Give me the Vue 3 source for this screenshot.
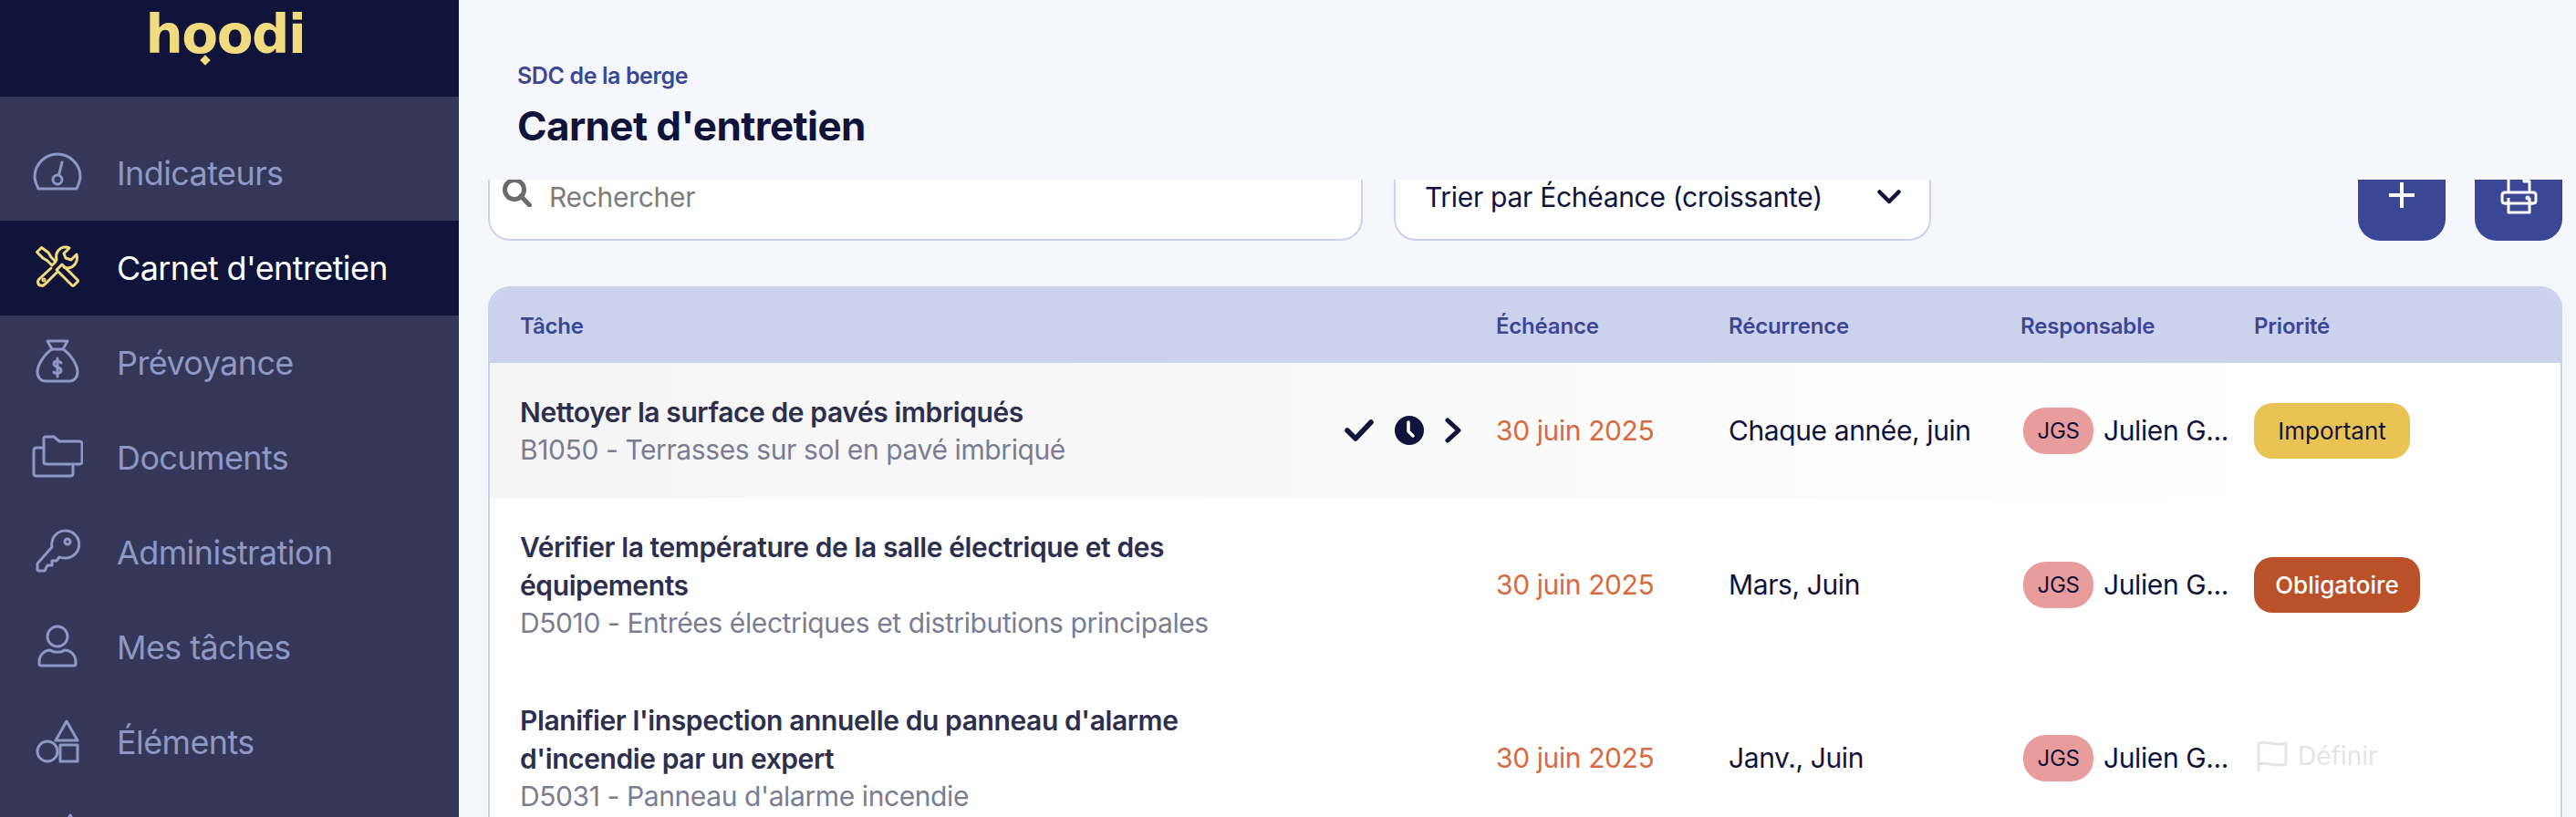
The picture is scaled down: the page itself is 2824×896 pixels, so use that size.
<script setup>
const nav = [
  { label: 'Indicateurs', paths: ['M7 45H49C51 40 53 37 53 32A25 25 0 0 0 3 32C3 37 5 40 7 45Z', 'M23 35a5 5 0 1 0 10 0a5 5 0 1 0-10 0Z', 'M29.5 30L33 16'] },
  { label: "Carnet d'entretien", active: true, paths: ['M5.5 10.5L10.5 5.5L18 11L21 16L26 21L22 25L17 20L12 17Z', 'M27 30L33 24L50 41Q51 42 50 43L46 47Q45 48 44 47Z', 'M27 19C25 12 30 4 38 5L41 6L35 12L37 17L43 19L49 13C51 20 47 28 38 28L35 27', 'M21 28L8 40C5 43 7 47 10 47C12 48 13 47 15 45L27 33', 'M12 41a1 1 0 1 0 2 0a1 1 0 1 0-2 0Z'] },
  { label: 'Prévoyance', paths: ['M17 4H39L34 13H22Z', 'M22 13C14 18 6 30 6 38C6 44 10 48 15 48H41C46 48 50 44 50 38C50 30 42 18 34 13', 'M32 28C31 26 24 25 24 29C24 33 32 32 32 36C32 40 25 40 24 38', 'M28 23V43'] },
  { label: 'Documents', paths: ['M13 7Q13 5 15 5H24L30 10H52Q55 10 55 13V32Q55 35 52 35H16Q13 35 13 32Z', 'M13 17H5Q2 17 2 20V45Q2 48 5 48H42Q45 48 45 45V36'] },
  { label: 'Administration', paths: ['M22 22A15 15 0 1 1 36 34C34 34 32 34 30 33L27 37H22V42H17L14 48H8Q6 48 6 46V40Z', 'M36 16a3 3 0 1 0 6 0a3 3 0 1 0-6 0Z'] },
  { label: 'Mes tâches', paths: ['M17 16a11 11 0 1 0 22 0a11 11 0 1 0-22 0Z', 'M8 44C8 36 14 31 20 31C24 34 32 34 36 31C42 31 48 36 48 44V46Q48 48 46 48H10Q8 48 8 46Z'] },
  { label: 'Éléments', paths: ['M38 5L50 26H26Z', 'M6 38a11 11 0 1 0 22 0a11 11 0 1 0-22 0Z', 'M31 31H50V49H31Z'] },
  { label: '', paths: ['M42 4L54 26H30Z'] }
]

const rows = [
  { title: 'Nettoyer la surface de pavés imbriqués', sub: 'B1050 - Terrasses sur sol en pavé imbriqué', rec: 'Chaque année, juin', prio: 'important', hover: true },
  { title: 'Vérifier la température de la salle électrique et des équipements', sub: 'D5010 - Entrées électriques et distributions principales', rec: 'Mars, Juin', prio: 'obligatoire' },
  { title: "Planifier l'inspection annuelle du panneau d'alarme d'incendie par un expert", sub: "D5031 - Panneau d'alarme incendie", rec: 'Janv., Juin', prio: '' }
]
</script>

<template>
  <div class="app">
    <aside class="side">
      <div class="brand"><span class="logo">hoodi<i class="dot"></i></span></div>
      <nav class="nav">
        <a v-for="item in nav" :key="item.label" class="nav-item" :class="{ active: item.active }">
          <svg class="nav-icon" viewBox="0 0 56 56" fill="none" stroke="currentColor" stroke-width="3" stroke-linejoin="round" stroke-linecap="round">
            <path v-for="d in item.paths" :key="d" :d="d" />
          </svg>
          <span>{{ item.label }}</span>
        </a>
      </nav>
    </aside>

    <main class="main">
      <header class="head">
        <div class="crumb">SDC de la berge</div>
        <h1 class="title">Carnet d'entretien</h1>
      </header>

      <div class="toolbar">
        <label class="search">
          <svg class="search-icon" viewBox="0 0 32 32" fill="none" stroke="#6b6b6b" stroke-width="5">
            <circle cx="13" cy="13" r="10.5" />
            <path d="M20 20L29.5 30" stroke-linecap="round" />
          </svg>
          <span>Rechercher</span>
        </label>
        <div class="sort">
          <span>Trier par Échéance (croissante)</span>
          <svg class="chev" viewBox="0 0 26 16" fill="none" stroke="#10133a" stroke-width="4.5" stroke-linecap="round" stroke-linejoin="round">
            <path d="M2.5 2.5L13 13L23.5 2.5" />
          </svg>
        </div>
        <div class="btns">
          <button class="btn">
            <svg width="30" height="30" viewBox="0 0 30 30" stroke="#fff" stroke-width="4"><path d="M15 1V29M1 15H29" /></svg>
          </button>
          <button class="btn">
            <svg width="44" height="48" viewBox="0 0 44 48" fill="none" stroke="#fff" stroke-width="3" stroke-linejoin="round">
              <path d="M11 21V6Q11 3 14 3H28L34 9V21M28 3V9H34" />
              <path d="M11 33H7Q4 33 4 30V24Q4 21 7 21H38Q41 21 41 24V30Q41 33 38 33H34" />
              <path d="M7 33H38M11 27V43H34V27" />
              <circle cx="32" cy="27" r="1" />
            </svg>
          </button>
        </div>
      </div>

      <section class="table">
        <div class="thead grid">
          <div>Tâche</div>
          <div>Échéance</div>
          <div>Récurrence</div>
          <div>Responsable</div>
          <div>Priorité</div>
        </div>
        <div v-for="row in rows" :key="row.title" class="row grid" :class="{ hover: row.hover }">
          <div class="task">
            <div class="task-text">
              <div class="task-title">{{ row.title }}</div>
              <div class="task-sub">{{ row.sub }}</div>
            </div>
            <div v-if="row.hover" class="actions">
              <svg width="32" height="24" viewBox="0 0 32 24" fill="none" stroke="#10133a" stroke-width="5.5" stroke-linecap="round" stroke-linejoin="round"><path d="M3 12L12 21L29 3" /></svg>
              <svg width="32" height="32" viewBox="0 0 32 32"><circle cx="16" cy="16" r="16" fill="#10133a" /><path d="M15 7V17L20 22" fill="none" stroke="#fff" stroke-width="3.5" stroke-linecap="round" stroke-linejoin="round" /></svg>
              <svg width="18" height="28" viewBox="0 0 18 28" fill="none" stroke="#10133a" stroke-width="5" stroke-linecap="round" stroke-linejoin="round"><path d="M3 3L15 14L3 25" /></svg>
            </div>
          </div>
          <div class="date">30 juin 2025</div>
          <div class="rec">{{ row.rec }}</div>
          <div class="resp"><span class="chip">JGS</span><span class="name">Julien G...</span></div>
          <div class="prio">
            <span v-if="row.prio === 'important'" class="badge important">Important</span>
            <span v-else-if="row.prio === 'obligatoire'" class="badge obligatoire">Obligatoire</span>
            <span v-else class="define">
              <svg width="34" height="34" viewBox="0 0 34 34" fill="none" stroke="#e4e5e8" stroke-width="3" stroke-linejoin="round"><path d="M2 34V3C12 0 22 7 32 3V26C22 30 12 23 2 26" /></svg>
              Définir
            </span>
          </div>
        </div>
      </section>
    </main>
  </div>
</template>

<style>
html, body { margin: 0; height: 896px; overflow: hidden; background: #f6f7fc; }
</style>

<style scoped>
.app { display: flex; width: 2824px; height: 896px; overflow: hidden; font-family: Inter, "Noto Sans", sans-serif; color: #10133a; }
.side { flex: none; width: 503px; background: #343757; overflow: hidden; }
.brand { height: 106px; background: #10133a; display: flex; justify-content: center; }
.logo { position: relative; height: 76px; margin-left: -9px; font-size: 58px; line-height: 76px; font-weight: 700; letter-spacing: -1.5px; color: #f0dc7e; font-family: "DejaVu Sans", sans-serif; }
.dot { position: absolute; left: 61px; top: 62px; width: 8px; height: 8px; background: #f0dc7e; transform: rotate(45deg); }
.nav { padding-top: 32px; }
.nav-item { display: flex; align-items: center; height: 104px; padding-left: 35px; gap: 37px; font-size: 36px; color: #8e98c6; letter-spacing: -0.6px; }
.nav-item.active { background: #10133a; color: #fff; }
.nav-item.active .nav-icon { color: #f0dc7e; }
.nav-icon { flex: none; width: 56px; height: 56px; }

.main { flex: 1; min-width: 0; background: #f6f7fc; }
.head { position: relative; z-index: 1; height: 197px; box-sizing: border-box; padding: 66px 0 0 64px; background: #f6f7fc; }
.crumb { font-size: 25px; line-height: 34px; font-weight: 600; color: #3a4794; letter-spacing: -0.4px; }
.title { margin: 12px 0 0; font-size: 44px; line-height: 52px; font-weight: 700; letter-spacing: -0.6px; }

.toolbar { display: flex; margin-top: -29px; padding: 0 15px 0 32px; gap: 34px; }
.search, .sort { box-sizing: border-box; height: 96px; background: #fff; border: 2px solid #cdd2ec; border-radius: 24px; display: flex; align-items: center; font-size: 30px; }
.search { width: 959px; padding-left: 14px; color: #7c7c7c; gap: 19px; letter-spacing: -0.3px; }
.search-icon { width: 32px; height: 32px; margin-top: -10px; }
.sort { width: 589px; padding: 0 31px 0 32px; justify-content: space-between; letter-spacing: -0.3px; }
.chev { width: 26px; height: 16px; margin-right: 0; }
.btns { margin-left: auto; display: flex; gap: 32px; }
.btn { width: 96px; height: 96px; padding: 0 0 4px; border: 0; border-radius: 24px; background: #3a4794; display: flex; align-items: center; justify-content: center; }

.table { margin: 50px 15px 0 32px; border: 2px solid #cdd2ec; border-bottom: 0; border-radius: 24px 24px 0 0; background: #fff; overflow: hidden; }
.grid { display: grid; grid-template-columns: 1103px 255px 320px 256px 1fr; align-items: center; padding-right: 0; }
.grid > :first-child { padding-left: 33px; }
.thead { height: 82px; background: #cdd2ec; color: #3a4794; font-size: 24px; font-weight: 600; letter-spacing: -0.2px; }
.row { padding: 33px 0; }
.row.hover { background: linear-gradient(90deg, #f5f5f6, #fafafa 50%, #fff 85%); }
.task { display: flex; align-items: center; justify-content: space-between; padding-right: 38px; }
.task-text { max-width: 800px; }
.task-title { font-size: 30px; line-height: 42px; font-weight: 600; color: #2c2f4e; letter-spacing: -0.4px; }
.task-sub { font-size: 30px; line-height: 40px; color: #7a7d92; letter-spacing: -0.4px; }
.actions { display: flex; align-items: center; gap: 23px; }
.date { font-size: 30px; color: #d66b42; letter-spacing: -0.4px; }
.rec { font-size: 30px; letter-spacing: -0.4px; }
.resp { display: flex; align-items: center; gap: 11px; padding-left: 3px; font-size: 30px; letter-spacing: -0.4px; }
.chip { width: 77px; height: 51px; border-radius: 25px / 24px; background: #e89c9c; display: flex; align-items: center; justify-content: center; font-size: 24px; }
.badge { display: inline-flex; align-items: center; justify-content: center; height: 61px; border-radius: 20px; font-size: 26px; }
.important { width: 171px; background: #eac355; }
.obligatoire { width: 182px; background: #bb5128; color: #fff; font-weight: 500; }
.define { display: inline-flex; align-items: center; gap: 11px; padding-left: 3px; color: #e4e5e8; font-size: 28px; }
</style>
